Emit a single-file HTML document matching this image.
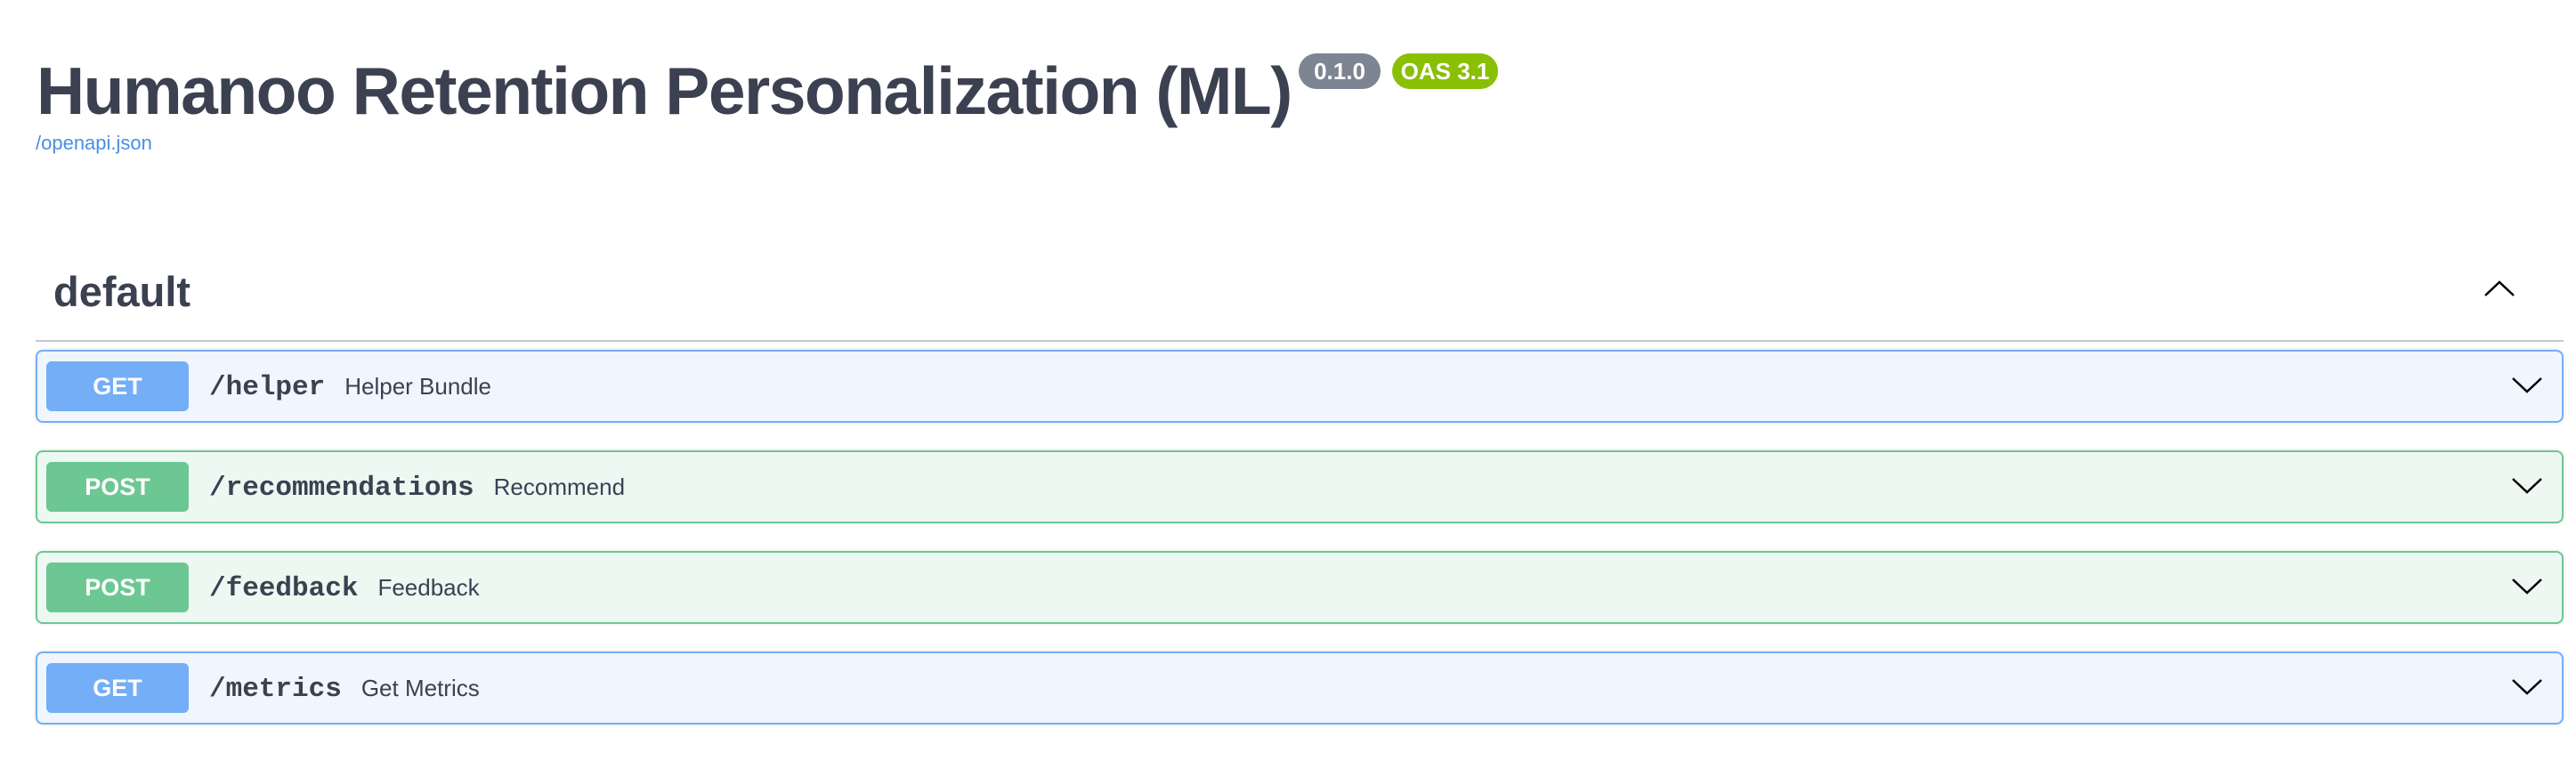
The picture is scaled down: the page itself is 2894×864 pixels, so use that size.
<!DOCTYPE html>
<html><head><meta charset="utf-8"><style>
body{margin:0;width:2894px;height:864px;background:#fff;font-family:"Liberation Sans",sans-serif;color:#3b4151;position:relative;overflow:hidden}
.t{position:absolute;left:41px;top:59px;font-size:75px;font-weight:bold;white-space:nowrap;letter-spacing:-1.5px}
.b{position:absolute;top:60px;height:40px;border-radius:20px;color:#fff;font-weight:bold;font-size:26px;line-height:40px;text-align:center}
.l{position:absolute;left:40px;top:148px;font-size:22px;color:#4990e2}
.d{position:absolute;left:60px;top:300px;font-size:47px;font-weight:bold}
.hr{position:absolute;left:40px;top:382px;width:2840px;height:2px;background:#c6c7cc}
.op{position:absolute;left:40px;width:2836px;height:78px;border:2px solid;border-radius:8px;box-shadow:0 0 4px rgba(0,0,0,.12)}
.g{background:#eff6fe;border-color:#73aef7}.p{background:#edf8f2;border-color:#6cc793}
.m{position:absolute;left:10px;top:11px;width:160px;height:56px;border-radius:6px;color:#fff;font-weight:bold;font-size:27px;line-height:56px;text-align:center}
.g .m{background:#73aef7}.p .m{background:#6cc793}
.pa{position:absolute;left:193px;top:0;line-height:78px;font-family:"Liberation Mono",monospace;font-weight:bold;font-size:31px;white-space:nowrap}
.pa span{font-family:"Liberation Sans",sans-serif;font-weight:normal;font-size:26px;margin-left:22px}
.ch{position:absolute;right:22px;top:28px}
</style></head><body>
<div class="t">Humanoo Retention Personalization (ML)</div>
<div class="b" style="left:1459px;width:92px;background:#7d8492">0.1.0</div>
<div class="b" style="left:1564px;width:119px;background:#89bf04">OAS 3.1</div>
<div class="l">/openapi.json</div>
<div class="d">default</div>
<svg style="position:absolute;left:2791px;top:314px" width="34" height="20" viewBox="0 0 34 20"><path d="M1 18L17 3L33 18" fill="none" stroke="#000" stroke-width="2.5"/></svg>
<div class="hr"></div>
<div class="op g" style="top:393px"><div class="m">GET</div><div class="pa">/helper<span>Helper Bundle</span></div><svg class="ch" width="34" height="20" viewBox="0 0 34 20"><path d="M1 2L17 17L33 2" fill="none" stroke="#000" stroke-width="2.5"/></svg></div>
<div class="op p" style="top:506px"><div class="m">POST</div><div class="pa">/recommendations<span>Recommend</span></div><svg class="ch" width="34" height="20" viewBox="0 0 34 20"><path d="M1 2L17 17L33 2" fill="none" stroke="#000" stroke-width="2.5"/></svg></div>
<div class="op p" style="top:619px"><div class="m">POST</div><div class="pa">/feedback<span>Feedback</span></div><svg class="ch" width="34" height="20" viewBox="0 0 34 20"><path d="M1 2L17 17L33 2" fill="none" stroke="#000" stroke-width="2.5"/></svg></div>
<div class="op g" style="top:732px"><div class="m">GET</div><div class="pa">/metrics<span>Get Metrics</span></div><svg class="ch" width="34" height="20" viewBox="0 0 34 20"><path d="M1 2L17 17L33 2" fill="none" stroke="#000" stroke-width="2.5"/></svg></div>
</body></html>
